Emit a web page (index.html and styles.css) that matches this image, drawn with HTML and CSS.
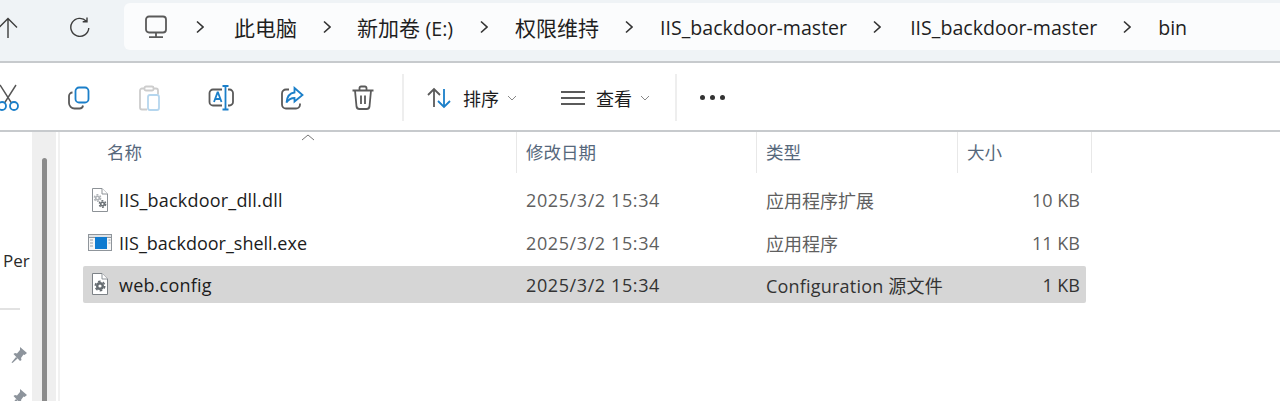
FILE: index.html
```html
<!DOCTYPE html>
<html lang="zh-CN">
<head>
  <meta charset="UTF-8" />
  <title>bin</title>
  <link rel="stylesheet" href="styles.css">
</head>
<body>
  <div class="navbar">
    <div class="nav-btn up">
      <svg width="24" height="26" viewBox="0 0 24 26"><path d="M8 3.500V23M-1 12.500L8 3.500L17 12.500" class="line"/></svg>
    </div>
    <div class="nav-btn reload">
      <svg width="22" height="22" viewBox="0 0 22 22"><path d="M17.400 5.200A9 9 0 1 0 19.800 12M18 1.500V5.800H13.700" class="line"/></svg>
    </div>
    <div class="crumbs">
      <svg class="pc" width="24" height="24" viewBox="0 0 24 24"><rect x="2" y="1.500" width="20" height="16" rx="3" class="thick"/><path d="M12 18v4M5 22.200h14" class="thick"/></svg>
      <svg class="sep" width="8" height="14" viewBox="0 0 8 14"><path d="M1 1.500L7 7L1 12.500"/></svg>
      <span class="crumb c1">此电脑</span>
      <svg class="sep s2" width="8" height="14" viewBox="0 0 8 14"><path d="M1 1.500L7 7L1 12.500"/></svg>
      <span class="crumb c2">新加卷 <span class="latin">(E:)</span></span>
      <svg class="sep s3" width="8" height="14" viewBox="0 0 8 14"><path d="M1 1.500L7 7L1 12.500"/></svg>
      <span class="crumb c3">权限维持</span>
      <svg class="sep s3" width="8" height="14" viewBox="0 0 8 14"><path d="M1 1.500L7 7L1 12.500"/></svg>
      <span class="crumb latin c4">IIS_backdoor-master</span>
      <svg class="sep s4" width="8" height="14" viewBox="0 0 8 14"><path d="M1 1.500L7 7L1 12.500"/></svg>
      <span class="crumb latin c5">IIS_backdoor-master</span>
      <svg class="sep s3" width="8" height="14" viewBox="0 0 8 14"><path d="M1 1.500L7 7L1 12.500"/></svg>
      <span class="crumb latin">bin</span>
    </div>
  </div>

  <div class="toolbar">
    <div class="tool cut">
      <svg width="26" height="30" viewBox="0 0 26 30"><path d="M4 2L15.500 20M20 2L8.500 20" class="line dark"/><circle cx="6" cy="23" r="4" class="blue"/><circle cx="18" cy="23" r="4" class="blue"/></svg>
    </div>
    <div class="tool">
      <svg width="24" height="24" viewBox="0 0 24 24"><rect x="8.500" y="1.500" width="13" height="15" rx="3.500" class="blue"/><path d="M5.500 6.500A3.500 3.500 0 0 0 2 10v7a5.500 5.500 0 0 0 5.500 5.500h5a3.500 3.500 0 0 0 3.500-3" class="thick"/></svg>
    </div>
    <div class="tool">
      <svg width="24" height="26" viewBox="0 0 24 26"><path d="M6 3.500H4a2 2 0 0 0-2 2v17a2 2 0 0 0 2 2h5M16 3.500h2a2 2 0 0 1 2 2v4" class="faint"/><rect x="6.500" y="1.500" width="9" height="4" rx="1.500" class="faint"/><rect x="10" y="10" width="11" height="15" rx="2" class="faint-blue"/></svg>
    </div>
    <div class="tool">
      <svg width="26" height="26" viewBox="0 0 26 26"><path d="M14 4.500H5a3.500 3.500 0 0 0-3.500 3.500v9A3.500 3.500 0 0 0 5 20.500h9M20 4.500h1.500A3.500 3.500 0 0 1 25 8v9a3.500 3.500 0 0 1-3.500 3.500H20" class="thick"/><path d="M14.500 1h6M14.500 24.500h6M17.500 1v23.500M6 17l3.500-9.500h0.500L13.500 17M7.200 14h5" class="blue"/></svg>
    </div>
    <div class="tool">
      <svg width="24" height="24" viewBox="0 0 24 24"><path d="M9 3.500H6A4 4 0 0 0 2 7.500v11a4 4 0 0 0 4 4h10a4 4 0 0 0 4-4v-1" class="thick"/><path d="M14.500 2L22.500 9L14.500 15.500V12C11 12 8.500 13.500 6.500 16.500C7 11 10 7 14.500 6.500Z" class="blue"/></svg>
    </div>
    <div class="tool">
      <svg width="24" height="26" viewBox="0 0 24 26"><path d="M1.500 5.500h21M8.500 5.500V3a1.500 1.500 0 0 1 1.500-1.500h4A1.500 1.500 0 0 1 15.500 3v2.500M4 5.500l1.500 16a3 3 0 0 0 3 2.500h7a3 3 0 0 0 3-2.500l1.500-16M10 10.500v8.500M14 10.500v8.500" class="thick"/></svg>
    </div>
    <div class="divider first"></div>
    <div class="menu sort">
      <svg width="24" height="22" viewBox="0 0 24 22"><path d="M7 20V2M1 8L7 2L13 8" class="thick"/><path d="M17 2V20M11 14L17 20L23 14" class="blue"/></svg>
      <span class="menu-label">排序</span>
      <svg class="chev" width="10" height="6" viewBox="0 0 10 6"><path d="M1 1L5 5L9 1"/></svg>
    </div>
    <div class="menu view">
      <svg width="24" height="16" viewBox="0 0 24 16"><path d="M0 2h24M0 8h24M0 14h24" class="thick"/></svg>
      <span class="menu-label">查看</span>
      <svg class="chev" width="10" height="6" viewBox="0 0 10 6"><path d="M1 1L5 5L9 1"/></svg>
    </div>
    <div class="divider second"></div>
    <div class="more"><i></i><i></i><i></i></div>
  </div>

  <div class="main">
    <div class="side">
      <div class="side-text">Per</div>
      <div class="side-rule"></div>
      <svg class="pin" width="18" height="18" viewBox="0 0 18 18"><path d="M10 1L17 7L14.500 9L13.500 8.500L11 12L11.500 14L10 15L3.500 8L5 7L7 7.500L10 4Z M6 11L1.500 16.500L2.500 17L7.500 12.500Z"/></svg>
      <svg class="pin second-pin" width="18" height="18" viewBox="0 0 18 18"><path d="M10 1L17 7L14.500 9L13.500 8.500L11 12L11.500 14L10 15L3.500 8L5 7L7 7.500L10 4Z M6 11L1.500 16.500L2.500 17L7.500 12.500Z"/></svg>
    </div>
    <div class="scroll"><div class="thumb"></div></div>
    <div class="files">
      <svg class="sort-caret" width="14" height="7" viewBox="0 0 14 7"><path d="M1 6L7 1L13 6"/></svg>
      <div class="head">
        <div class="col name">名称</div>
        <div class="col date">修改日期</div>
        <div class="col type">类型</div>
        <div class="col size">大小</div>
      </div>
      <div class="row r1">
        <svg class="ficon" width="18" height="24" viewBox="0 0 18 24"><path d="M1.500 0.500H11L16.500 6V23.500H1.500Z" class="page"/><path d="M11 0.500V6H16.500" class="page"/><circle cx="6.500" cy="10" r="1.800" class="gear-core light"/><circle cx="6.500" cy="10" r="3.200" class="gear-teeth light"/><circle cx="11.500" cy="16" r="1.800" class="gear-core"/><circle cx="11.500" cy="16" r="3.200" class="gear-teeth"/></svg>
        <div class="name">IIS_backdoor_dll.dll</div>
        <div class="date">2025/3/2 15:34</div>
        <div class="type">应用程序扩展</div>
        <div class="size">10 KB</div>
      </div>
      <div class="row r2">
        <svg class="ficon exe" width="24" height="18" viewBox="0 0 24 18"><rect x="0.500" y="0.500" width="23" height="16" fill="#f6f6f6" stroke="#8f959b"/><rect x="0.500" y="0.500" width="23" height="3" fill="#dfe3e6" stroke="#8f959b"/><rect x="7" y="3" width="12" height="12" fill="#0f7bd0"/><path d="M2 6h3M2 9h3M2 12h3M20.500 6h2M20.500 9h2" stroke="#9aa0a5"/></svg>
        <div class="name">IIS_backdoor_shell.exe</div>
        <div class="date">2025/3/2 15:34</div>
        <div class="type">应用程序</div>
        <div class="size">11 KB</div>
      </div>
      <div class="row r3 selected">
        <svg class="ficon" width="18" height="24" viewBox="0 0 18 24"><path d="M1.500 0.500H11L16.500 6V21.500H1.500Z" fill="#fff" stroke="#7d8287"/><path d="M11 0.500V6H16.500" class="page"/><circle cx="9" cy="13" r="2.800" class="cog"/><circle cx="9" cy="13" r="4.700" class="cog-teeth"/></svg>
        <div class="name">web.config</div>
        <div class="date">2025/3/2 15:34</div>
        <div class="type">Configuration 源文件</div>
        <div class="size">1 KB</div>
      </div>
    </div>
  </div>
</body>
</html>
```

FILE: styles.css
```css
* {
  box-sizing: border-box;
}
html, body {
  height: 100%;
}
body {
  margin: 0;
  width: 1280px;
  height: 401px;
  overflow: hidden;
  background-color: #fff;
  color: #1c1c1c;
  font-family: "Open Sans", "Noto Sans CJK SC", sans-serif;
  font-size: 18px;
  display: flex;
  flex-direction: column;
}
svg {
  display: block;
  flex: none;
  fill: none;
}
.line {
  stroke: #3c3c3c;
  stroke-width: 1.4;
  fill: none;
}
.line.dark {
  stroke: #555;
}
.thick {
  stroke: #5a5a5a;
  stroke-width: 1.8;
  fill: none;
}
.blue {
  stroke: #1b7fc9;
  stroke-width: 1.8;
  fill: none;
}
.faint {
  stroke: #cdcdcd;
  stroke-width: 1.8;
}
.faint-blue {
  stroke: #b5d6ee;
  stroke-width: 1.8;
}

.navbar {
  height: 63px;
  flex: none;
  background-color: #eff3f6;
  border-bottom: 2px solid #c7cacd;
  display: flex;
  align-items: flex-start;
}
.nav-btn.up {
  width: 69px;
  padding-top: 15px;
}
.nav-btn.reload {
  width: 55px;
  padding-top: 16px;
}
.crumbs {
  flex: 1;
  height: 47px;
  margin-top: 3px;
  background-color: #fbfcfd;
  border-radius: 6px 0 0 6px;
  display: flex;
  align-items: center;
  padding-left: 20px;
  font-size: 21px;
  color: #1f1f1f;
}
.pc {
  margin-right: 28px;
}
.sep {
  margin-right: 30px;
}
.sep.s2 {
  margin-right: 26px;
}
.sep.s3 {
  margin-right: 27px;
}
.sep.s4 {
  margin-right: 29px;
}
.sep path {
  stroke: #333;
  stroke-width: 1.6;
}
.crumb {
  white-space: nowrap;
}
.latin {
  font-size: 19.6px;
}
.crumb.latin {
  padding-top: 2px;
}
.crumb.c1 {
  margin-right: 26px;
}
.crumb.c2 {
  margin-right: 27px;
}
.crumb.c3 {
  margin-right: 26px;
}
.crumb.c4 {
  margin-right: 26px;
}
.crumb.c5 {
  margin-right: 26px;
}

.toolbar {
  height: 69px;
  flex: none;
  background-color: #fff;
  border-bottom: 2px solid #c7cacd;
  display: flex;
  align-items: center;
  padding-top: 2px;
}
.tool {
  width: 71px;
  display: flex;
  justify-content: center;
}
.tool.cut {
  width: 43px;
}
.tool.cut svg {
  margin-left: -26px;
}
.divider {
  width: 2px;
  height: 47px;
  background-color: #eeeeee;
}
.divider.first {
  margin-left: 4px;
}
.menu {
  display: flex;
  align-items: center;
  font-size: 18px;
}
.menu.sort {
  margin-left: 23px;
  width: 134px;
}
.menu.view {
  width: 114px;
}
.menu-label {
  margin-left: 12px;
  margin-right: 8px;
}
.view .menu-label {
  margin-left: 11px;
}
.chev path {
  stroke: #888;
  stroke-width: 1;
}
.more {
  display: flex;
  gap: 5px;
  margin-left: 23px;
}
.more i {
  width: 5px;
  height: 5px;
  border-radius: 50%;
  background-color: #333;
}

.main {
  flex: 1;
  display: flex;
  min-height: 0;
}
.side {
  width: 32px;
  overflow: hidden;
  flex: none;
}
.side-text {
  margin-top: 117px;
  padding-left: 3px;
  font-size: 17px;
  line-height: 24px;
  color: #2a2a2a;
}
.side-rule {
  margin-top: 35px;
  width: 20px;
  height: 2px;
  background-color: #e2e2e2;
}
.pin {
  margin: 36px 0 0 10px;
}
.pin path {
  fill: #8d949c;
}
.second-pin {
  margin-top: 24px;
}
.scroll {
  width: 24px;
  flex: none;
  background-color: #efefef;
  padding: 26px 0 0 10px;
}
.thumb {
  width: 5px;
  height: 100%;
  background-color: #8b8b8b;
  border-radius: 3px 3px 0 0;
}
.files {
  flex: 1;
  margin-left: 2px;
  border-left: 2px solid #f1f1f1;
  position: relative;
  padding-left: 23px;
}
.sort-caret {
  position: absolute;
  left: 241px;
  top: 2px;
}
.sort-caret path {
  stroke: #777;
  stroke-width: 1;
}
.head {
  display: flex;
  height: 41px;
  width: 1009px;
  font-size: 17.5px;
  color: #56687c;
  line-height: 41px;
}
.col {
  border-right: 1px solid #e8e8e8;
  padding-left: 9px;
}
.head .name {
  width: 434px;
  padding-left: 24px;
}
.head .date {
  width: 240px;
}
.head .type {
  width: 201px;
}
.head .size {
  width: 134px;
}
.row {
  display: flex;
  align-items: center;
  width: 1003px;
  height: 37px;
  margin-top: 6px;
  white-space: nowrap;
  border-radius: 2px;
}
.row.r1 {
  margin-top: 8px;
}
.row.selected {
  margin-top: 5px;
  background-color: #d6d6d6;
}
.ficon {
  margin-left: 8px;
  width: 18px;
}
.ficon.exe {
  margin-left: 5px;
  width: 24px;
}
.row .name {
  width: 417px;
  padding-left: 10px;
  color: #1c1c1c;
}
.row.r1 .name, .row.selected .name {
  letter-spacing: 0.2px;
}
.row.r2 .name {
  padding-left: 7px;
  width: 414px;
}
.row .date {
  width: 240px;
  color: #5f5f5f;
  letter-spacing: 0.6px;
}
.row .type {
  width: 200px;
  color: #5f5f5f;
}
.row .size {
  width: 114px;
  text-align: right;
  color: #5f5f5f;
}
.row.selected .date, .row.selected .type, .row.selected .size {
  color: #333;
}
.row.selected .type {
  letter-spacing: 0.2px;
}
.page {
  fill: #fff;
  stroke: #8d9297;
}
.gear-core {
  stroke: #6d7378;
  stroke-width: 1.6;
}
.gear-teeth {
  stroke: #6d7378;
  stroke-width: 1.4;
  stroke-dasharray: 2 1.400;
}
.gear-core.light, .gear-teeth.light {
  stroke: #b0b4b8;
}
.cog {
  stroke: #666c71;
  stroke-width: 2.4;
}
.cog-teeth {
  stroke: #666c71;
  stroke-width: 1.6;
  stroke-dasharray: 2.600 2.300;
}
```
